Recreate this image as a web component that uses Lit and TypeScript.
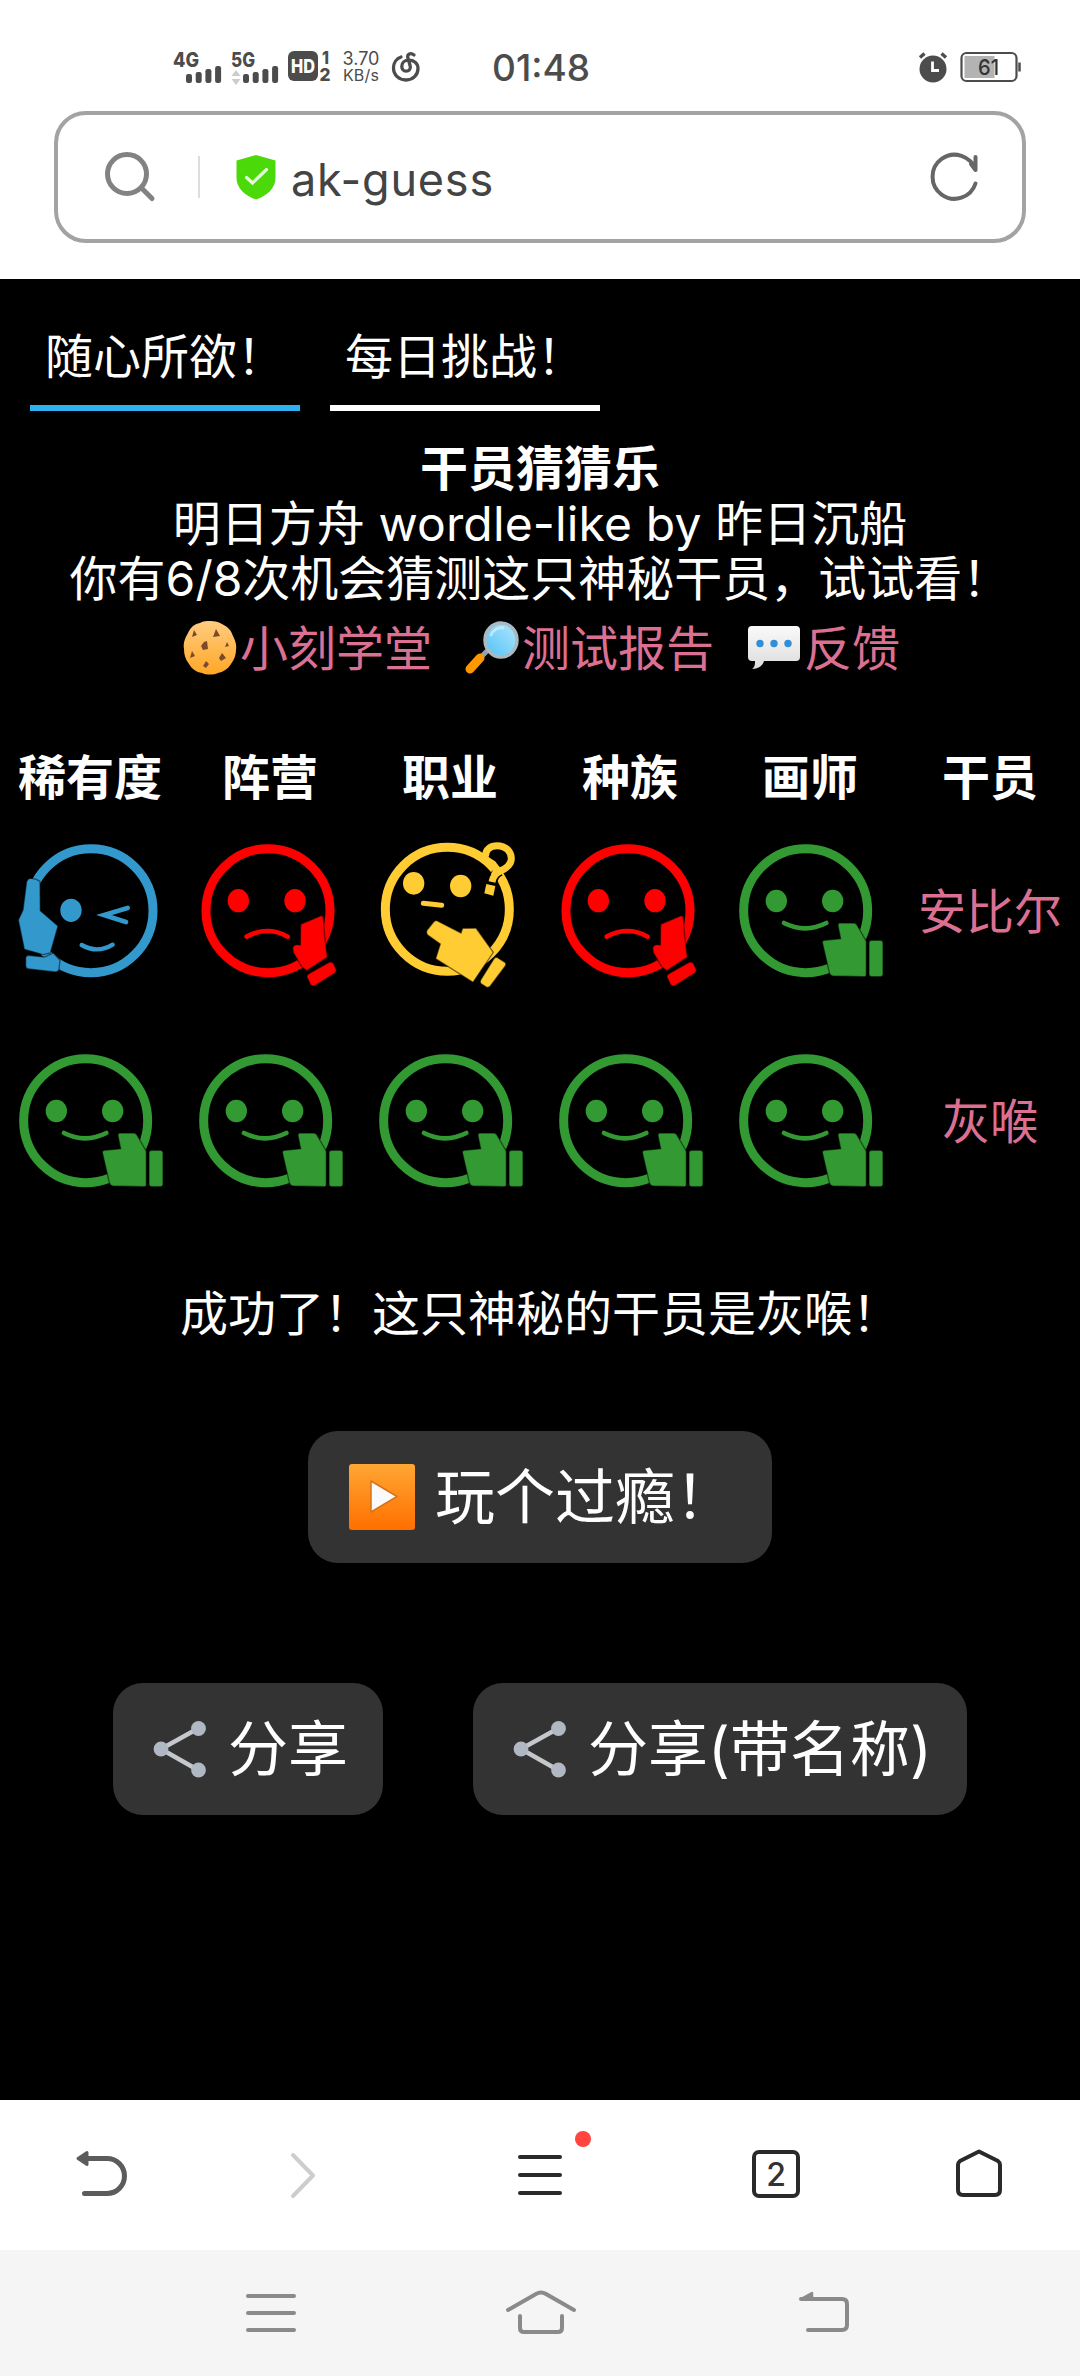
import { LitElement, html, svg, css } from "lit";
import { customElement, property } from "lit/decorators.js";

type Mood = "wink" | "sad" | "think" | "smile";

const MOOD_COLORS: Record<Mood, string> = {
  wink: "#3399cc",
  sad: "#ff0000",
  think: "#ffcc33",
  smile: "#339933",
};

const FACES = {
  wink: svg`
    <circle cx="273" cy="272" r="186" fill="none" stroke="currentColor" stroke-width="27"/>
    <ellipse cx="213" cy="271" rx="32" ry="35"/>
    <path d="M383 264L312 285L378 306" fill="none" stroke="currentColor" stroke-width="14" stroke-linecap="round"/>
    <path d="M245 375Q292 402 338 374" fill="none" stroke="currentColor" stroke-width="13" stroke-linecap="round"/>
    <path class="cut" d="M86 176Q104 173 120 184L121 272L174 318L151 399L130 404L73 388L55 300L69 270L80 184Z"/>
    <path class="cut" d="M84 406L134 411L160 399L180 421L177 448Q175 456 166 456L86 447Q77 446 77 437L77 414Q78 407 84 406Z"/>`,
  sad: svg`
    <circle cx="264" cy="272" r="186" fill="none" stroke="currentColor" stroke-width="27"/>
    <ellipse cx="175" cy="242" rx="32" ry="35"/>
    <ellipse cx="345" cy="242" rx="32" ry="35"/>
    <path d="M200 350Q262 316 323 350" fill="none" stroke="currentColor" stroke-width="14" stroke-linecap="round"/>
    <path class="cut" d="M362 313L421 288Q429 285 430 294L434 348L442 412L380 452L365 440L340 398L338 384Q341 373 352 374L361 375Z"/>
    <path class="cut" d="M385 462L447 427Q455 424 460 430L469 448Q471 454 465 459L405 497Q396 501 391 493L381 472Q380 466 385 462Z"/>`,
  think: svg`
    <circle cx="262" cy="268" r="186" fill="none" stroke="currentColor" stroke-width="27"/>
    <ellipse cx="161" cy="190" rx="32" ry="34"/>
    <ellipse cx="302" cy="198" rx="32" ry="34"/>
    <path d="M190 250L245 256" fill="none" stroke="currentColor" stroke-width="15" stroke-linecap="round"/>
    <path d="M421 153C406 160 400 168 396 190" fill="none" stroke="#000" stroke-width="30"/>
    <path d="M365 112L398 132L412 150L402 168" fill="none" stroke="currentColor" stroke-width="22"/>
    <path d="M376 110C376 86 394 77 411 77C438 77 454 95 454 116C454 135 438 145 421 153C406 160 400 168 396 186" fill="none" stroke="currentColor" stroke-width="21"/>
    <path d="M379 192L406 198L400 227L373 220Z"/>
    <path class="cut" d="M231 302L303 339L308 325L348 324L400 397L339 487L227 416L241 372L202 344Q197 338 201 331L220 307Q225 301 231 302Z"/>
    <path class="cut" d="M413 413L435 427Q440 432 436 438L391 498Q386 504 379 501L363 491Q359 487 362 480L402 416Q407 410 413 413Z"/>`,
  smile: svg`
    <circle cx="257" cy="272" r="186" fill="none" stroke="currentColor" stroke-width="27"/>
    <ellipse cx="169" cy="243" rx="32" ry="34"/>
    <ellipse cx="338" cy="243" rx="32" ry="34"/>
    <path d="M192 309Q255 341 319 309" fill="none" stroke="currentColor" stroke-width="14" stroke-linecap="round"/>
    <path class="cut" d="M358 309L403 309Q408 310 411 315L439 364L439 464Q439 470 433 470L338 468Q330 467 328 458L307 367Q307 361 314 361L362 356L354 317Q354 310 358 309Z"/>
    <path class="cut" d="M455 361L482 361Q489 362 489 368L489 463Q489 470 482 470L455 470Q447 470 447 463L447 368Q447 361 455 361Z"/>`,
};

@customElement("mood-face")
class MoodFace extends LitElement {
  @property() mood: Mood = "smile";
  static styles = css`
    :host { display: block; width: 180px; height: 200px; }
    svg { display: block; width: 180px; height: 200px; fill: currentColor; }
    .cut { stroke: rgba(0, 0, 0, 0.5); stroke-width: 4; }
  `;
  render() {
    return html`<svg viewBox="0 0 540 600" style="color:${MOOD_COLORS[this.mood]}">${FACES[this.mood]}</svg>`;
  }
}

@customElement("status-bar")
class StatusBar extends LitElement {
  static styles = css`
    :host {
      display: flex; align-items: center; height: 134px; margin-bottom: -23px;
      color: #4c4c4c; font-family: Inter, "Liberation Sans", sans-serif;
    }
    svg { display: block; flex: none; overflow: visible; }
    .signal { margin-left: 173px; }
    .hd { margin-left: 5px; }
    .label { font: 800 20px Inter, sans-serif; fill: #4c4c4c; }
    .digit { font: 800 18px Inter, sans-serif; fill: #4c4c4c; }
    .hdtext { font: 800 19px Inter, sans-serif; fill: #fff; }
    .speed {
      margin-left: 9px; width: 40px; display: flex; flex-direction: column; align-items: center;
      font-size: 18px; line-height: 16.5px; white-space: nowrap;
    }
    .unit { font-size: 16px; letter-spacing: 0.2px; }
    .music { margin-left: 10px; }
    .time { margin-left: 71px; width: 100px; font-size: 37px; font-weight: 500; white-space: nowrap; }
    .alarm { margin-left: auto; }
    .battery { margin: 0 59px 0 12px; }
    .charge { font: 500 22px Inter, sans-serif; fill: #333; }
  `;
  bars(x: number) {
    return [9, 11, 14, 17].map((h, i) => svg`<rect x=${x + i * 9.7} y=${34 - h} width="6" height=${h} rx="2.2" fill="#4c4c4c"/>`);
  }
  render() {
    return html`
      <svg class="signal" width="110" height="40" viewBox="0 -2 110 40">
        <text class="label" x="0" y="17.5" textLength="26" lengthAdjust="spacingAndGlyphs">4G</text>
        ${this.bars(13)}
        <text class="label" x="58" y="17.5" textLength="24" lengthAdjust="spacingAndGlyphs">5G</text>
        <path d="M63 21l4.500 6h-9zM63 36l4.500-6h-9z" fill="#ccc"/>
        ${this.bars(70)}
      </svg>
      <svg class="hd" width="44" height="36" viewBox="0 0 44 36">
        <rect x="0" y="2" width="30" height="30" rx="6" fill="#4c4c4c"/>
        <text class="hdtext" x="3" y="24" textLength="24" lengthAdjust="spacingAndGlyphs">HD</text>
        <text class="digit" x="34" y="15" textLength="7" lengthAdjust="spacingAndGlyphs">1</text>
        <text class="digit" x="31.5" y="32" textLength="11" lengthAdjust="spacingAndGlyphs">2</text>
      </svg>
      <div class="speed"><span>3.70</span><span class="unit">KB/s</span></div>
      <svg class="music" width="30" height="32" viewBox="0 0 30 32" fill="none" stroke="#4c4c4c" stroke-width="3.300" stroke-linecap="round">
        <path d="M10 6C5.500 7.500 2.500 12 2.500 17C2.500 24 8 29 15 29C22 29 27 24 27 17.500C27 12 22.500 9.200 18 9.200C13.500 9.200 10.800 12 10.800 15.200C10.800 18 12.500 20.200 15 20.200C18 20.200 20 18 19.200 15L16.800 6.500C16 3.500 19.500 1.200 23 4"/>
      </svg>
      <div class="time">01:48</div>
      <svg class="alarm" width="30" height="32" viewBox="0 0 30 32">
        <circle cx="15" cy="18" r="13.500" fill="#4c4c4c"/>
        <path d="M2 6.500l4.500-4M28 6.500l-4.500-4" stroke="#4c4c4c" stroke-width="3.400"/>
        <path d="M14.500 10.500v9h6.500" fill="none" stroke="#fff" stroke-width="2.800"/>
      </svg>
      <svg class="battery" width="61" height="32" viewBox="0 0 61 32">
        <rect x="1.500" y="2" width="55" height="28" rx="5" fill="#fff" stroke="#4c4c4c" stroke-width="2.200"/>
        <rect x="4.500" y="5" width="30" height="22" fill="#b3b3b3"/>
        <path d="M59.500 11.500v9" stroke="#4c4c4c" stroke-width="2.500"/>
        <text class="charge" x="18" y="24" textLength="21" lengthAdjust="spacingAndGlyphs">61</text>
      </svg>`;
  }
}

@customElement("address-bar")
class AddressBar extends LitElement {
  static styles = css`
    :host {
      display: flex; align-items: center; box-sizing: border-box; position: relative;
      height: 132px; margin: 0 54px 36px; border: 4px solid #a3a3a3; border-radius: 32px;
      background: #fff; font-family: Inter, "Liberation Sans", sans-serif;
    }
    svg { display: block; flex: none; }
    .search { margin-left: 44px; }
    .divider { width: 2px; height: 42px; margin-left: 42px; background: #ddd; }
    .shield { margin-left: 36px; }
    .url { margin-left: 15px; color: #444; font-size: 45px; line-height: 60px; letter-spacing: 0.8px; padding-top: 5px; }
    .reload { margin: 0 41px 0 auto; }
  `;
  render() {
    return html`
      <svg class="search" width="54" height="54" viewBox="0 0 54 54" fill="none" stroke="#828282" stroke-width="5" stroke-linecap="round">
        <circle cx="25" cy="24" r="19.500"/><path d="M40 38.500L50 48.500"/>
      </svg>
      <span class="divider"></span>
      <svg class="shield" width="40" height="46" viewBox="0 0 40 46">
        <path d="M20 1L39.500 6.500V24C39.500 34 31 42 20 45.500C9 42 .5 34 .5 24V6.500Z" fill="#4cd90a"/>
        <path d="M10.500 23.500L16.500 29L30.500 15.500" fill="none" stroke="#e6fbdc" stroke-width="3.200" stroke-linecap="round"/>
      </svg>
      <span class="url">ak-guess</span>
      <svg class="reload" width="54" height="54" viewBox="0 0 54 54" fill="none" stroke="#666" stroke-width="4" stroke-linecap="round" stroke-linejoin="round">
        <path d="M48.500 33.500A22 22 0 1 1 48.500 20M48.500 7V20L44 14"/>
      </svg>`;
  }
}

const cookieIcon = html`<svg class="emoji" viewBox="0 0 60 60">
  <defs><linearGradient id="ck" x1="0" y1="0" x2="0" y2="1"><stop offset="0" stop-color="#ffcc80"/><stop offset="1" stop-color="#ffa726"/></linearGradient></defs>
  <path d="M30 3C35 3 39 4 42 6C48 9 51 12 53 18C55 22 57 27 56 32C56 37 54 42 51 46C48 51 43 54 38 55C33 57 27 57 22 55C16 54 12 51 9 46C5 41 4 36 4 31C3 25 5 20 8 15C10 10 14 6 20 5C23 3 27 3 30 3Z" fill="url(#ck)"/>
  <g fill="#7b4a2b"><path d="M14 12l3 5-5 2z"/><path d="M36 11l4 7-7 1z"/><path d="M24 24l3-1 1 8-5 1-2-4z"/><path d="M47 24l2 4-4 1z"/><path d="M12 33l3 5-5 2z"/><path d="M42 35l4 5-5 3-2-3z"/><path d="M26 43l3 3-3 4-3-2z"/></g>
</svg>`;

const lensIcon = html`<svg class="emoji" viewBox="0 0 60 60">
  <defs><linearGradient id="ln" x1="1" y1="0" x2="0" y2="1"><stop offset="0" stop-color="#b3e5fc"/><stop offset="1" stop-color="#4fc3f7"/></linearGradient></defs>
  <path d="M18 40L27 31" stroke="#90a4ae" stroke-width="5"/>
  <path d="M8 51L18 40" stroke="#ff9800" stroke-width="9" stroke-linecap="round"/>
  <ellipse cx="39" cy="22" rx="16" ry="17" fill="url(#ln)" stroke="#a9bac3" stroke-width="3.500"/>
  <path d="M29 17C31 12 36 9 41 10" fill="none" stroke="#e1f5fe" stroke-width="3" stroke-linecap="round" opacity=".6"/>
</svg>`;

const bubbleIcon = html`<svg class="emoji" viewBox="0 0 60 60">
  <defs><linearGradient id="bb" x1="0" y1="0" x2="0" y2="1"><stop offset="0" stop-color="#fafafa"/><stop offset="1" stop-color="#dcdcdc"/></linearGradient></defs>
  <path d="M8 8H52Q56 8 56 12V39Q56 43 52 43H20C19 47 15 51 8 51C11 49 11 46 11 43H8Q4 43 4 39V12Q4 8 8 8Z" fill="url(#bb)"/>
  <g fill="#2f8fdb"><circle cx="16" cy="25.500" r="3.700"/><circle cx="30" cy="25.500" r="3.700"/><circle cx="44" cy="25.500" r="3.700"/></g>
</svg>`;

const playIcon = html`<svg class="play" viewBox="0 0 68 68">
  <defs><linearGradient id="pl" x1="0" y1="0" x2="0" y2="1"><stop offset="0" stop-color="#ffa733"/><stop offset="1" stop-color="#ff6f00"/></linearGradient></defs>
  <rect x="1" y="1" width="66" height="66" rx="3" fill="url(#pl)"/>
  <path d="M23 18L49 33.500L23 49Z" fill="#fafafa" stroke="#d9731a" stroke-width="1.500" stroke-linejoin="round"/>
</svg>`;

const shareIcon = html`<svg class="share" viewBox="0 0 54 58">
  <path d="M45 8.500L8 29L45 50" fill="none" stroke="#c4c7cc" stroke-width="4.500"/>
  <g fill="#b0b8c4"><circle cx="45.500" cy="8.500" r="7.400"/><circle cx="8" cy="29" r="7.400"/><circle cx="45.500" cy="50" r="7.400"/></g>
</svg>`;

const COLUMNS = ["稀有度", "阵营", "职业", "种族", "画师", "干员"];
const GUESSES: { name: string; moods: Mood[] }[] = [
  { name: "安比尔", moods: ["wink", "sad", "think", "sad", "smile"] },
  { name: "灰喉", moods: ["smile", "smile", "smile", "smile", "smile"] },
];
const LINKS = [
  { icon: cookieIcon, label: "小刻学堂" },
  { icon: lensIcon, label: "测试报告" },
  { icon: bubbleIcon, label: "反馈" },
];

@customElement("guess-game")
class GuessGame extends LitElement {
  static styles = css`
    :host {
      display: flex; flex-direction: column; align-items: center; flex: 1; background: #000; color: #fff;
      font-family: Inter, "Noto Sans CJK SC", sans-serif; font-size: 48px; white-space: nowrap;
    }
    .tabs { display: flex; gap: 30px; align-self: stretch; padding: 30px 30px 0; }
    .tab { width: 270px; height: 96px; line-height: 96px; text-align: center; border-bottom: 6px solid #fff; }
    .active { border-color: #2fb0ef; }
    .intro { margin-top: 30px; text-align: center; line-height: 55px; }
    .title { font-weight: 700; }
    .latin { letter-spacing: 0.15px; }
    .links { display: flex; gap: 30px; margin-top: 12px; line-height: 62px; color: #db7093; }
    .link { display: flex; height: 60px; }
    .emoji { width: 60px; height: 60px; }
    .grid { display: grid; grid-template-columns: repeat(6, 180px); margin-top: 63px; text-align: center; }
    .head { height: 79px; line-height: 74px; font-weight: 700; }
    .cell { height: 210px; }
    .name { line-height: 183px; color: #db7093; }
    .result { margin-top: 44px; width: 720px; line-height: 60px; }
    .button {
      display: flex; align-items: center; box-sizing: border-box; height: 132px; border-radius: 30px;
      background: #333; font-size: 60px; line-height: 132px;
    }
    .again { margin-top: 87px; width: 464px; padding-left: 40px; gap: 19px; }
    .play { width: 68px; height: 68px; }
    .shares { display: flex; gap: 90px; margin-top: 120px; }
    .shares .button { padding: 0 35px 0 40px; gap: 21px; }
    .share { width: 54px; height: 58px; }
  `;
  render() {
    return html`
      <div class="tabs"><div class="tab active">随心所欲！</div><div class="tab">每日挑战！</div></div>
      <div class="intro">
        <div class="title">干员猜猜乐</div>
        <div>明日方舟<span class="latin"> wordle-like by </span>昨日沉船</div>
        <div>你有6/8次机会猜测这只神秘干员，试试看！</div>
      </div>
      <div class="links">${LINKS.map((l) => html`<div class="link">${l.icon}<span>${l.label}</span></div>`)}</div>
      <div class="grid">
        ${COLUMNS.map((c) => html`<div class="head">${c}</div>`)}
        ${GUESSES.map((g) => html`
          ${g.moods.map((m) => html`<div class="cell"><mood-face .mood=${m}></mood-face></div>`)}
          <div class="cell name">${g.name}</div>`)}
      </div>
      <div class="result">成功了！这只神秘的干员是灰喉！</div>
      <div class="button again">${playIcon}<span>玩个过瘾！</span></div>
      <div class="shares">
        <div class="button">${shareIcon}<span>分享</span></div>
        <div class="button">${shareIcon}<span>分享(带名称)</span></div>
      </div>`;
  }
}

@customElement("bottom-bars")
class BottomBars extends LitElement {
  static styles = css`
    :host { display: block; }
    .tools, .system { display: grid; align-items: center; justify-items: center; fill: none; stroke-linecap: round; stroke-linejoin: round; }
    .tools { grid-template-columns: 204px 198px 276px 196px 210px; height: 150px; background: #fff; stroke: #2a2a2a; }
    .system { grid-template-columns: 270px 270px 296px; padding-left: 136px; height: 126px; background: #f5f5f5; stroke: #8a8a8a; }
    svg { display: block; overflow: visible; }
    .menu { position: relative; }
    .dot { position: absolute; left: 57px; top: -22px; width: 16px; height: 16px; border-radius: 50%; background: #ff453e; }
    .count { font: 500 32px Inter, sans-serif; fill: #333; stroke: none; text-anchor: middle; }
  `;
  render() {
    return html`
      <div class="tools">
        <svg width="52" height="50" stroke="#5c5c5c" stroke-width="5"><path d="M10 8.500H31A17.500 17.500 0 0 1 31 43.500H8.500"/><path d="M2 8.500L11 2.500V14.500Z" fill="#5c5c5c" stroke-width="3"/></svg>
        <svg width="24" height="44" stroke="#cdcdcd" stroke-width="4"><path d="M2 2L22 22.500L2 43"/></svg>
        <div class="menu">
          <svg width="44" height="44" stroke-width="4"><path d="M2 4H42M2 22H42M2 40H42"/></svg>
          <span class="dot"></span>
        </div>
        <svg width="48" height="48" stroke-width="4"><rect x="2" y="1" width="44" height="44" rx="5"/><text class="count" x="24" y="34.500">2</text></svg>
        <svg width="48" height="48" stroke-width="4"><path d="M24 .5L43 10Q45 11.500 45 14V39Q45 44 40 44H8Q3 44 3 39V14Q3 11.500 5 10Z"/></svg>
      </div>
      <div class="system">
        <svg width="50" height="44" stroke-width="4"><path d="M2 5H48M2 22H48M2 39H48"/></svg>
        <svg width="70" height="44" stroke-width="4"><path d="M2 19L30 3Q35 0 40 3L68 19M14 25V37Q14 41 18 41H52Q56 41 56 37V25"/></svg>
        <svg width="52" height="44" stroke-width="4"><path d="M3 8H44Q49 8 49 13V34Q49 39 44 39H10"/><path d="M3 8L14 2V8Z" fill="#8a8a8a" stroke-width="2.500"/></svg>
      </div>`;
  }
}

@customElement("app-root")
class AppRoot extends LitElement {
  static styles = css`
    :host { display: flex; flex-direction: column; width: 1080px; height: 2376px; background: #fff; overflow: hidden; }
  `;
  render() {
    return html`<status-bar></status-bar><address-bar></address-bar><guess-game></guess-game><bottom-bars></bottom-bars>`;
  }
}
